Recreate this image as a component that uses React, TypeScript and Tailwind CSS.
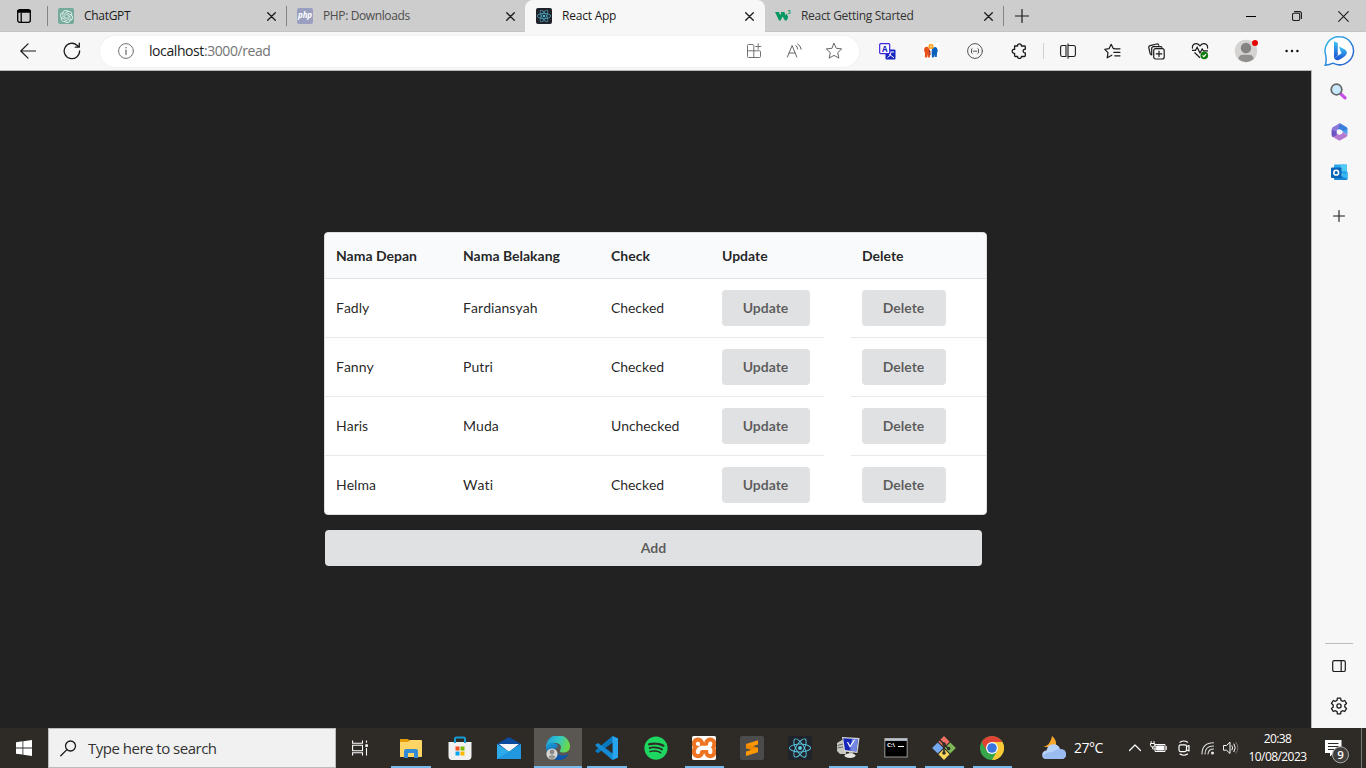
import React from "react";
import { FaReact, FaSpotify } from "react-icons/fa";
import { SiOpenai, SiXampp } from "react-icons/si";

type Kids = { children?: React.ReactNode };

function Line({ size = 16, w = 1, color = "#1b1b1b", children }: Kids & { size?: number; w?: number; color?: string }) {
  return (
    <svg width={size} height={size} viewBox={`0 0 ${size} ${size}`} fill="none" stroke={color} strokeWidth={w} strokeLinecap="round" strokeLinejoin="round" className="shrink-0">
      {children}
    </svg>
  );
}

function CloseX({ size = 9, w = 1.3 }: { size?: number; w?: number }) {
  return (
    <Line size={size} w={w}>
      <path d={`M.7 .7 L${size - 0.7} ${size - 0.7} M${size - 0.7} .7 L.7 ${size - 0.7}`} />
    </Line>
  );
}

function Tab({ icon, title, active, className, textClass }: { icon: React.ReactNode; title: string; active?: boolean; className: string; textClass: string }) {
  return (
    <div className={`flex h-8 items-center ${active ? "rounded-t-lg bg-[#f7f7f7] px-[11px]" : "px-[10px]"} ${className}`}>
      <div className="flex h-4 w-4 shrink-0 items-center justify-center">{icon}</div>
      <span className={`ml-[10px] flex-1 whitespace-nowrap text-[12px] leading-4 ${textClass}`}>{title}</span>
      <CloseX />
    </div>
  );
}

function Cell({ children, className = "w-11" }: Kids & { className?: string }) {
  return <div className={`flex h-full shrink-0 items-center justify-center ${className}`}>{children}</div>;
}

function TabStrip() {
  return (
    <div className="flex h-8 items-center bg-[#cdcdcd] shadow-[inset_0_-1px_0_#c3c3c3]">
      <Cell className="w-[47px]">
        <Line size={14} w={1.3} color="#000">
          <rect x=".7" y=".7" width="12.6" height="12.6" rx="2" />
          <path d="M1 2.4H13" strokeWidth="2.6" />
          <path d="M4.2 4V13" />
        </Line>
      </Cell>
      <div className="h-5 w-px bg-[#858585]" />
      <Tab
        className="w-[238px]"
        title="ChatGPT"
        textClass="text-[#1b1b1b] tracking-[-0.3px]"
        icon={<div className="flex h-4 w-4 items-center justify-center rounded-[2px] bg-[#74aa9c] text-[#e9f3f0]"><SiOpenai size={13} /></div>}
      />
      <div className="h-5 w-px bg-[#858585]" />
      <Tab
        className="w-[238px]"
        title="PHP: Downloads"
        textClass="text-[#4c4c4c] tracking-[-0.38px]"
        icon={<div className="flex h-4 w-4 items-center justify-center rounded-[2px] bg-[#9a9fc0] pb-0.5 text-[8px] font-bold italic leading-none tracking-[-0.2px] text-white">php</div>}
      />
      <Tab
        active
        className="w-[240px]"
        title="React App"
        textClass="text-[#1b1b1b] tracking-[-0.22px]"
        icon={<div className="flex h-4 w-4 items-center justify-center rounded-[2px] bg-[#20232a] text-[#61dafb]"><FaReact size={14} opacity={0.8} /></div>}
      />
      <Tab
        className="w-[238px]"
        title="React Getting Started"
        textClass="text-[#333] tracking-[-0.3px]"
        icon={
          <svg width="16" height="16" viewBox="0 0 16 16">
            <path d="M0 4H3.8L5.3 7.3L6.2 5.3L5.6 4H9.3L10.8 7.4L11.6 5.6L13.2 9.2L11.6 12.4H9.9L7.6 8.5L5.6 12.4H4Z" fill="#059862" />
            <text x="12.4" y="6" fontSize="5.5" fontWeight="700" fill="#059862">3</text>
          </svg>
        }
      />
      <div className="h-5 w-px bg-[#858585]" />
      <Cell className="w-[35px]">
        <Line size={14} w={1.2}><path d="M7 .5V13.5M.5 7H13.5" /></Line>
      </Cell>
      <div className="flex-1" />
      <Cell className="w-[46px]"><div className="h-px w-[10px] bg-black" /></Cell>
      <Cell className="w-[46px]">
        <Line size={10} w={1.1}>
          <rect x=".5" y="2.3" width="7.2" height="7.2" rx="1.5" />
          <path d="M2.5 .6H7.4A2 2 0 0 1 9.4 2.6V7.4" />
        </Line>
      </Cell>
      <Cell className="w-[46px]"><CloseX size={11} w={1.1} /></Cell>
    </div>
  );
}

function Toolbar() {
  return (
    <div className="flex h-[38px] items-center bg-[#f7f7f7]">
      <Cell className="ml-1.5 w-11"><Line size={16}><path d="M15.5 8H.8M8 .8L.8 8L8 15.2" strokeWidth="1.2" /></Line></Cell>
      <Cell>
        <Line size={18} w={1.3}><path d="M16.6 8.8A7.7 7.7 0 1 1 14 3.2L16 5M16.3 1.2V5.2H12.3" /></Line>
      </Cell>
      <div className="ml-1.5 flex h-[31px] w-[759px] items-center rounded-full bg-white pl-[18px] pr-[5px] shadow-[0_0_2px_#e6e6e6]">
        <Line size={16} color="#737373"><circle cx="8" cy="8" r="7.4" /><path d="M8 7.2V11.5" strokeWidth="1.3" /><path d="M8 4.7V4.8" strokeWidth="1.6" /></Line>
        <span className="ml-[15px] flex-1 whitespace-nowrap text-[14px] leading-5 tracking-[-0.42px] text-[#1b1b1b]">
          localhost<span className="text-[#747474]">:3000/read</span>
        </span>
        <Cell className="w-10">
          <Line size={16} color="#737373"><path d="M6.5 1.5H2.5Q1.5 1.5 1.5 2.5V13.5Q1.5 14.5 2.5 14.5H13.5Q14.5 14.5 14.5 13.5V8.5Q14.5 7.8 13.5 7.8H1.5M7.8 14.5V2.5Q7.8 1.5 6.5 1.5M12.2 .8V6.2M9.6 3.5H14.8" /></Line>
        </Cell>
        <Cell className="w-10">
          <Line size={16} color="#666"><path d="M1.4 14L6.1 2.5L10.8 14M3.1 10H9.1M9.9 2.5Q11.6 3.8 11.6 6M11.6 .9Q14.8 2.6 15.2 6.3" /></Line>
        </Cell>
        <Cell className="w-10">
          <Line size={18} color="#666"><path d="M9 1.4L11.3 6.3L16.7 6.9L12.7 10.6L13.9 16.1L9 13.4L4.1 16.1L5.3 10.6L1.3 6.9L6.7 6.3Z" /></Line>
        </Cell>
      </div>
      <Cell className="ml-1.5 w-11">
        <svg width="17" height="17" viewBox="0 0 17 17">
          <rect x="6.5" y="6.5" width="10" height="10" rx="1" fill="#1725c4" />
          <path d="M8.5 9H15M12 9Q12 13 8.5 14.5M10 11L15 14.8" stroke="#fff" fill="none" />
          <rect x=".7" y=".7" width="10" height="10" rx="1" fill="#fff" stroke="#3a25df" strokeWidth="1.2" />
          <text x="3" y="8.6" fontSize="8" fontWeight="700" fill="#1725c4">A</text>
        </svg>
      </Cell>
      <Cell>
        <svg width="16" height="16" viewBox="0 0 16 16">
          <rect width="16" height="16" fill="#fff" />
          <path d="M1.2 5.5Q2 3 5 4L7.4 8L6.8 14.5H4.6L4.4 11L3.8 14.5H1.8L2 10Q.6 8 1.2 5.5Z" fill="#e8501c" />
          <path d="M9 6Q12 2.4 14.2 5.5Q15.4 8 14 10L13.8 14H11.8L11.6 11.5L10.8 14.5H9L8.6 9Z" fill="#0862bd" />
          <circle cx="8" cy="3.4" r="2.6" fill="#f8a126" /><circle cx="8" cy="3.4" r="1.1" fill="#fcd08a" />
          <path d="M6.4 7L7.2 12" stroke="#8c2b43" />
        </svg>
      </Cell>
      <Cell><Line size={16} color="#555"><circle cx="8" cy="8" r="7.4" /><path d="M5.2 5.3Q4 5.6 4.5 8Q4 10.4 5.2 10.7M10.8 5.3Q12 5.6 11.5 8Q12 10.4 10.8 10.7M6.3 8.2H9.7" /></Line></Cell>
      <Cell>
        <Line size={16} w={1.3}><path d="M3.6 3H6.6C6.2 .2 10.8 .2 10.4 3H13.4Q14.3 3 14.3 3.8V6.3C11.4 5.8 11.4 10.3 14.3 9.8V12.7Q14.3 13.5 13.4 13.5H10.4C10.8 16 6.2 16 6.6 13.5H4.4Q3.6 13.5 3.6 12.7V10.3C.4 10.6 .4 5.9 3.6 6.3V3Z" /></Line>
      </Cell>
      <div className="ml-0.5 mr-0.5 h-4 w-px bg-[#d0d0d0]" />
      <Cell>
        <Line size={16} w={1.1}><path d="M6 2.5H2.5Q.6 2.5 .6 4.3V11.7Q.6 13.5 2.5 13.5H6ZM10 2.5H13.5Q15.4 2.5 15.4 4.3V11.7Q15.4 13.5 13.5 13.5H10M8 .8V15.2M8 2.5H10M8 13.5H10" /></Line>
      </Cell>
      <Cell>
        <Line size={17} w={1.2}><path d="M10.3 5.7H9.4L7.2 1.3L5 5.7L.8 6.4L4 9.7L3.2 14.8L7.8 12.2M10.8 5.8H16M9.8 9.3H16M10.8 12.8H16" /></Line>
      </Cell>
      <Cell>
        <Line size={17} w={1.2}><rect x="5.7" y="5.7" width="10.5" height="10.3" rx="2" /><path d="M11 8V13.6M8.2 10.8H13.8M3.6 11.8Q2.4 11.5 2.1 10.5L.8 4.5Q.5 3 2 2.6L8.8 1Q10.3 .7 10.8 2.2M3.7 12V5.6Q3.7 3.6 5.7 3.6H12.5Q13.7 3.6 13.9 4.4" /></Line>
      </Cell>
      <Cell>
        <svg width="18" height="18" viewBox="0 0 18 18" fill="none" stroke="#1b1b1b" strokeWidth="1.2">
          <path d="M1.5 6.7C.6 1.1 6.1 .2 9 3.8C11.9 .2 17.4 1.1 16.5 6.7M1 8.4H4.5L6.2 5.4L9 11L11.2 7L12.4 8.8H17M3.5 10.5L9 15.7" />
          <circle cx="13.3" cy="13.4" r="3.8" fill="#107c10" stroke="none" /><path d="M11.6 13.4L12.8 14.6L15.1 12.2" stroke="#fff" />
        </svg>
      </Cell>
      <Cell className="w-12">
        <svg width="24" height="24" viewBox="0 0 24 24" className="overflow-visible">
          <circle cx="12" cy="12" r="11.2" fill="#d4d3d1" />
          <circle cx="12" cy="9" r="5.2" fill="#858381" />
          <path d="M4.3 20.1Q5 15.8 9 15.8H15Q19 15.8 19.7 20.1Q16.2 23.2 12 23.2Q7.8 23.2 4.3 20.1Z" fill="#918f8d" />
          <circle cx="21" cy="4" r="3" fill="#e60000" />
        </svg>
      </Cell>
      <Cell>
        <svg width="14" height="4" viewBox="0 0 14 4" fill="#111"><circle cx="1.6" cy="2" r="1.2" /><circle cx="7" cy="2" r="1.2" /><circle cx="12.4" cy="2" r="1.2" /></svg>
      </Cell>
      <Cell className="w-[49px]">
        <svg width="32" height="32" viewBox="0 0 32 32">
          <defs>
            <linearGradient id="bb" x1="0" y1="0" x2="1" y2="1"><stop stopColor="#31bce9" /><stop offset="1" stopColor="#2856ce" /></linearGradient>
            <linearGradient id="bl" x1="0" y1="0" x2="0" y2="1"><stop stopColor="#3bc8f5" /><stop offset="1" stopColor="#1b4fd3" /></linearGradient>
          </defs>
          <path d="M16.5 1.8A14 14 0 1 1 10 28.2Q6.5 30 2.2 30.2Q3.8 26.7 2.8 20.3A14 14 0 0 1 16.5 1.8Z" fill="#fff" stroke="url(#bb)" strokeWidth="1.5" />
          <path d="M11 6.2L14.8 8V20.5L11 23Z" fill="url(#bl)" />
          <path d="M16 11.5L22 14.5Q24.3 16.3 23.5 19Q22.7 21.5 15.8 25Q12.8 26 11 23L18.6 18.3L17.5 16Z" fill="url(#bl)" />
        </svg>
      </Cell>
    </div>
  );
}

const people = [
  ["Fadly", "Fardiansyah", "Checked"],
  ["Fanny", "Putri", "Checked"],
  ["Haris", "Muda", "Unchecked"],
  ["Helma", "Wati", "Checked"],
];

const columns = "grid-cols-[127px_148px_111px_113px_27px_135px]";

function ActionButton({ label, className }: { label: string; className: string }) {
  return (
    <button className={`flex h-9 items-center justify-center rounded-[4px] bg-[#e0e1e2] text-[14px] font-bold leading-[14px] text-black/60 ${className}`}>
      {label}
    </button>
  );
}

function Page() {
  return (
    <main className="flex-1 bg-[#222] pl-[324px] pt-[161px] font-['Lato',sans-serif] text-[14px] text-black/87 [font-variant-ligatures:none]">
      <section className="w-[663px] overflow-hidden rounded-[4px] border border-[#dededf] bg-white">
        <div className={`grid h-[46px] items-center border-b border-[#e1e2e3] bg-[#f9fafb] font-bold ${columns}`}>
          <div className="pl-[11px]">Nama Depan</div>
          <div className="pl-[11px]">Nama Belakang</div>
          <div className="pl-[11px]">Check</div>
          <div className="pl-[11px]">Update</div>
          <div />
          <div className="pl-[11px]">Delete</div>
        </div>
        {people.map(([first, last, check], i) => {
          const cell = `flex items-center pl-[11px] ${i < people.length - 1 ? "border-b border-[#e8e9e9]" : ""}`;
          const text = `${cell} pb-0.5 [font-kerning:none]`;
          return (
            <div key={first} className={`grid ${i < people.length - 1 ? "h-[59px]" : "h-[58px]"} ${columns}`}>
              <div className={text}>{first}</div>
              <div className={`${text} tracking-[0.06px]`}>{last}</div>
              <div className={`${text} tracking-[-0.08px]`}>{check}</div>
              <div className={cell}><ActionButton label="Update" className="w-[88px] pr-px" /></div>
              <div />
              <div className={cell}><ActionButton label="Delete" className="w-[84px] pr-px" /></div>
            </div>
          );
        })}
      </section>
      <ActionButton label="Add" className="ml-px mt-[15px] w-[657px]" />
    </main>
  );
}

function Sidebar() {
  return (
    <aside className="flex w-[55px] flex-col items-center border-l border-[#b9b9b9] bg-[#f7f7f7] pt-px">
      <div className="flex h-10 w-full items-center justify-center pr-px">
        <svg width="17" height="17" viewBox="0 0 17 17">
          <path d="M10.8 10.8L15 14.8" stroke="#c84be8" strokeWidth="3.2" strokeLinecap="round" />
          <circle cx="6.5" cy="6.5" r="5.3" fill="#c8e9fb" stroke="#666" strokeWidth="1.7" />
        </svg>
      </div>
      <div className="flex h-[42px] w-full items-center justify-center">
        <svg width="17" height="18" viewBox="0 0 17 18">
          <path d="M8.5 .3L15.2 4Q16.5 4.8 16.5 6.3V11.5L12.3 9.2L11 7L8.5 5.8L5.5 6.7L4.9 3Z" fill="#4ba0ee" />
          <path d="M9 .3L2 4Q.7 4.8 .7 6.3V11.7Q.7 13.2 2 14L5.6 13V8.3Q5.9 6.8 7 6.2L11 3.5Z" fill="#8d78d9" />
          <path d="M.7 11.7Q.7 13.2 2 14L7.5 17.2Q8.5 17.8 9.5 17.2L15.2 14Q16.5 13.2 16.5 11.7L11.4 8.8V10.4L8.5 12L5.6 10.4Z" fill="#b47ad0" />
          <path d="M.7 7V11.7Q.7 13.2 2 14L5.6 12V8.5Z" fill="#6c54c2" />
          <path d="M9 .3L15.2 4Q16.5 4.8 16.5 6.3L11.4 8Q10 6 7 6.2Z" fill="#2f74d6" opacity=".7" />
        </svg>
      </div>
      <div className="flex h-[39px] w-full items-center justify-center">
        <svg width="17" height="17" viewBox="0 0 17 17">
          <rect x="3" y=".5" width="13" height="10" rx="1" fill="#28a8ea" />
          <path d="M9.5 .5H15Q16 .5 16 1.5V7H9.5Z" fill="#50c9f5" />
          <path d="M3 8L9.8 12L16.5 8V15Q16.5 16 15.5 16H4Q3 16 3 15Z" fill="#1784d6" />
          <path d="M16.5 8V15L10 12Z" fill="#35b8f1" />
          <rect y="3.5" width="10.5" height="10.5" rx="1" fill="#0864b8" />
          <circle cx="5.2" cy="8.7" r="2.4" fill="none" stroke="#fff" strokeWidth="1.5" />
        </svg>
      </div>
      <div className="flex h-[47px] w-full items-center justify-center pr-px">
        <Line size={12} w={1.1}><path d="M6 .5V11.5M.5 6H11.5" /></Line>
      </div>
      <div className="flex-1" />
      <div className="h-px w-7 bg-[#bdbdbd]" />
      <div className="flex h-[44px] w-full items-center justify-center">
        <Line size={14} w={1.2}><rect x=".7" y="1.7" width="12.6" height="10.8" rx="1.6" /><path d="M9.2 1.7V12.5" /></Line>
      </div>
      <div className="mb-1 flex h-9 w-full items-center justify-center">
        <Line size={18} w={1.3}>
          <circle cx="9" cy="9" r="2.1" />
          <path d="M7.4 1.2H10.6L11 3.4L12.6 4.3L14.7 3.5L16.5 6.4L14.8 7.9V10.1L16.5 11.6L14.7 14.5L12.6 13.7L11 14.6L10.6 16.8H7.4L7 14.6L5.4 13.7L3.3 14.5L1.5 11.6L3.2 10.1V7.9L1.5 6.4L3.3 3.5L5.4 4.3L7 3.4Z" />
        </Line>
      </div>
    </aside>
  );
}

function App24({ children }: Kids) {
  return <svg width="24" height="24" viewBox="0 0 24 24">{children}</svg>;
}

function Task({ children, className = "w-12", bar = "w-0", active = false }: Kids & { className?: string; bar?: string; active?: boolean }) {
  return (
    <div className={`flex h-10 shrink-0 flex-col items-center ${active ? "bg-[#5a5652]" : ""} ${className}`}>
      <div className="flex h-[38px] items-center pt-0.5">{children}</div>
      <div className={`h-0.5 bg-[#76b9ed] ${bar}`} />
    </div>
  );
}

function Taskbar() {
  return (
    <footer className="flex h-10 bg-[#2e2a26] text-white">
      <Cell className="w-12">
        <svg width="16" height="16" viewBox="0 0 16 16" fill="#fff"><path d="M0 2.2L6.5 1.3V7.5H0ZM7.3 1.2L16 0V7.5H7.3ZM0 8.4H6.5V14.6L0 13.7ZM7.3 8.4H16V16L7.3 14.8Z" /></svg>
      </Cell>
      <div className="flex w-72 items-center border border-[#bbb] bg-[#f1f1f1] pl-[11px]">
        <Line size={17} w={1.3}><circle cx="10.5" cy="6" r="5" /><path d="M6.9 9.6L.8 15.8" /></Line>
        <span className="ml-[11px] whitespace-nowrap text-[15px] leading-5 tracking-[-0.5px] text-[#333]">Type here to search</span>
      </div>
      <Cell className="w-[51px] pr-[3px]">
        <svg width="17" height="16" viewBox="0 0 17 16" fill="none" stroke="#fff" strokeWidth="1.1">
          <path d="M.6 .5V3.2H10.5V.5M.6 15.5V12.8H10.5V15.5M.6 5.2H10.5V10.8H.6ZM14.5 .5V2.8M14.5 8V15.5" /><rect x="13.3" y="4.3" width="2.6" height="2.6" fill="#fff" stroke="none" />
        </svg>
      </Cell>
      <Task bar="w-10">
        <App24>
          <path d="M1 3H9L11 5H22V9H1Z" fill="#e59c09" />
          <path d="M1 6H9L11 4H22Q23 4 23 5V20Q23 21 22 21H1Z" fill="#ffd666" />
          <path d="M5 22V15Q5 13 7 13H17Q19 13 19 15V22H15V17H9V22Z" fill="#328bd4" />
        </App24>
      </Task>
      <Task className="w-[49px]">
        <App24>
          <path d="M7 8V3Q7 1.5 8.5 1.5H15.5Q17 1.5 17 3V8" fill="none" stroke="#169bd5" strokeWidth="2" />
          <path d="M.5 6H23.5V20Q23.5 24 20 24H4Q.5 24 .5 20Z" fill="#f1f1f1" />
          <path d="M7.5 10.5H11.5V14.5H7.5Z" fill="#f25022" /><path d="M12.5 10.5H16.5V14.5H12.5Z" fill="#7fba00" />
          <path d="M7.5 15.5H11.5V19.5H7.5Z" fill="#00a4ef" /><path d="M12.5 15.5H16.5V19.5H12.5Z" fill="#ffb900" />
          <path d="M7 7V3.5M17 7V3.5" stroke="#169bd5" strokeWidth="2" />
        </App24>
      </Task>
      <Task className="w-[50px]">
        <App24>
          <path d="M0 8L12 1L24 8V12H0Z" fill="#0b4c9f" />
          <path d="M2 8H22L12 16Z" fill="#f5f7f8" />
          <path d="M0 8L12 15.5L24 8V23H0Z" fill="#2daae8" />
          <path d="M0 23L24 8V23Z" fill="#1687d5" opacity=".55" />
        </App24>
      </Task>
      <Task active bar="w-12">
        <App24>
          <defs>
            <linearGradient id="eg" x1="0" y1="0" x2="1" y2=".3"><stop stopColor="#2099df" /><stop offset=".55" stopColor="#30c7c8" /><stop offset="1" stopColor="#6ad84d" /></linearGradient>
            <linearGradient id="eb" x1="0" y1="0" x2=".5" y2="1"><stop stopColor="#1ba1dd" /><stop offset="1" stopColor="#0b4b9c" /></linearGradient>
          </defs>
          <path d="M0 12A12 12 0 0 1 24 10Q24 16 18 16.5Q13.5 16.6 14 14.8Q17 9 11 7Q3 6 0 12Z" fill="url(#eg)" />
          <path d="M0 12Q2 6 8 7Q12 8 12 11Q8 12 9 16Q11 21 17 20Q21 19 22.5 18Q19 24 12 24Q1 23 0 12Z" fill="url(#eb)" />
          <path d="M9 13Q10 19 17 19.5Q21 19.4 22.6 18Q19 24 12 24Q7 21 7 16Z" fill="#0d58ad" />
          <circle cx="6" cy="18" r="5.6" fill="#d8d7d5" /><circle cx="6" cy="16" r="2.4" fill="#8b8987" /><path d="M2.5 21.3Q3 19 6 19Q9 19 9.5 21.3Q6 24.5 2.5 21.3Z" fill="#979592" />
        </App24>
      </Task>
      <Task className="w-[49px] pl-px" bar="w-10">
        <App24>
          <path d="M17.5 0L23 2.6V21.4L17.5 24L7.2 13.9L3 17.2L.5 15.7V14.2L17.5 .1Z" fill="#0878bf" />
          <path d="M.5 8.4L3 6.9L17.5 18V24L.5 9.8Z" fill="#168bd3" />
          <path d="M17.5 0L23 2.6V21.4L17.5 24Z" fill="#28a5ef" />
          <path d="M17.5 6.7V17.3L10.3 12Z" fill="#2e2a26" />
        </App24>
      </Task>
      <Task className="w-[49px]"><FaSpotify size={24} color="#1ed760" /></Task>
      <Task bar="w-[39px]">
        <div className="flex h-6 w-6 items-center justify-center overflow-hidden rounded-[2px] bg-[#ee7422]">
          <SiXampp size={34} color="white" className="shrink-0" />
        </div>
      </Task>
      <Task>
        <App24>
          <rect width="24" height="24" rx="2" fill="#4b4b4b" />
          <path d="M6 8L18 4.2V8.6L6 12.4Z" fill="#ff9800" />
          <path d="M6 8L18 11.8V16L6 12.2Z" fill="#f08a00" />
          <path d="M6 15.6L18 11.8V16.2L6 20Z" fill="#ff9800" />
        </App24>
      </Task>
      <Task>
        <div className="flex h-6 w-6 items-center justify-center rounded-[3px] bg-[#20232a]"><FaReact size={22} color="#5bcbe8" /></div>
      </Task>
      <Task bar="w-[39px]">
        <App24>
          <path d="M1 7L6 4L10 6V18L4 18L1 15Z" fill="#c6c8c0" /><path d="M1.5 9.5L7 8M1.5 12L7 11" stroke="#666" />
          <path d="M6 1L23.5 2L21.5 17L8 15.5Z" fill="#d8d9d2" /><path d="M7.2 2.2L22 3.2L20.3 15.4L9 14Z" fill="#1727ba" />
          <path d="M16 2.8L22 3.2L20.3 15.4L14 14.6Z" fill="#7487e4" /><path d="M11.5 6L14 10.5L18.5 4" fill="none" stroke="#fff" strokeWidth="1.2" />
          <path d="M13 16H17V19H13Z" fill="#aaa" /><ellipse cx="14" cy="19.6" rx="5.5" ry="2.3" fill="#e5e5df" />
        </App24>
      </Task>
      <Task bar="w-[39px]">
        <App24>
          <rect x=".8" y="2.5" width="22.4" height="18.5" fill="#000" stroke="#999" /><path d="M1 3.7H23" stroke="#bcc2cb" strokeWidth="2.4" />
          <text x="3" y="11" fontSize="6" fontWeight="700" fill="#fff">C:\</text><path d="M14 10.5H20" stroke="#fff" />
        </App24>
      </Task>
      <Task bar="w-[39px]">
        <App24>
          <g transform="rotate(45 12 12)"><path d="M3.6 3.6H11.5V11.5H3.6Z" fill="#ef7065" /><path d="M12.5 3.6H20.4V11.5H12.5Z" fill="#80b957" /><path d="M3.6 12.5H11.5V20.4H3.6Z" fill="#75a8ef" /><path d="M12.5 12.5H20.4V20.4H12.5Z" fill="#f6d65b" /></g>
          <path d="M8 4L12 8V18M12 8.5L16.5 12.5" stroke="#302d29" strokeWidth="1.6" fill="none" /><circle cx="12" cy="8" r="1.8" fill="#302d29" /><circle cx="12" cy="17" r="1.8" fill="#302d29" /><circle cx="16.6" cy="12.5" r="1.8" fill="#302d29" />
        </App24>
      </Task>
      <Task bar="w-[39px]">
        <App24>
          <circle cx="12" cy="12" r="12" fill="#37a64a" />
          <path d="M12 0A12 12 0 0 1 22.4 6H12L6.8 15L1.6 6A12 12 0 0 1 12 0Z" fill="#df4435" />
          <path d="M22.4 6A12 12 0 0 1 12 24L17.2 15L12 6Z" fill="#fbc935" />
          <circle cx="12" cy="12" r="6" fill="#fff" /><circle cx="12" cy="12" r="4.8" fill="#3974df" />
        </App24>
      </Task>
      <div className="flex-1" />
      <div className="flex w-[350px] shrink-0 items-center">
        <Cell className="ml-[26px] w-6">
          <App24>
            <path d="M10 0Q15.5 4 13.5 11H1Q8.5 9.5 10 0Z" fill="#f7a82b" />
            <path d="M3 23Q0 22 .2 18.5Q.7 14.8 4.5 14.5Q5.7 8.5 11.2 8.2Q16.5 8 18 13Q23.7 13.2 24 18Q24 22.5 20 23Z" fill="#b8d3fb" />
            <path d="M1 20Q4 16 10 16Q14 13 18 13Q23.7 13.2 24 18Q24 22.5 20 23H3Z" fill="#9bbcf0" />
          </App24>
        </Cell>
        <span className="ml-2 w-[30px] whitespace-nowrap text-[14px] leading-5 tracking-[-0.5px]">27°C</span>
        <Cell className="ml-[17px] w-7"><Line size={12} w={1.2} color="#fff"><path d="M.5 8.5L6 3L11.5 8.5" /></Line></Cell>
        <Cell className="w-6 pr-[5px]">
          <Line size={17} color="#fff"><rect x="5.5" y="4.5" width="9.5" height="7" /><rect x="7" y="6" width="6.5" height="4" fill="#fff" /><path d="M16.3 6.5V9.5M1.2 1.5V3.5M4 1.5V3.5M.6 3.5H4.7V5.5Q4.7 7 2.7 7Q.6 7 .6 5.5ZM2.7 7V9H5" /></Line>
        </Cell>
        <Cell className="w-6 pr-0.5">
          <Line size={16} w={1.2} color="#fff"><rect x="3" y="4.8" width="7.5" height="6.8" rx="1.5" /><path d="M10.8 6.5L13 5.5V11L10.8 10M4 2.2Q8 -.2 11.5 2.2M4 14Q8 16.5 11.5 14" /></Line>
        </Cell>
        <Cell className="w-6 pr-0.5">
          <Line size={14} w={1.1} color="#ddd"><path d="M1 13Q1 2 12.5 1.8M4 13Q4 5 12.5 5M7 13Q7.5 8 12.5 8" /><circle cx="11.5" cy="12" r="1" fill="#fff" /></Line>
        </Cell>
        <Cell className="w-[22px] pr-0.5">
          <Line size={16} color="#fff"><path d="M.8 5.5H3.5L7 2.2V13.5L3.5 10.2H.8ZM9 5.8Q10.5 7.8 9 10M11 4Q13.7 7.8 11 11.7" /><path d="M13 2.4Q17 8 13 13.2" stroke="#77736f" /></Line>
        </Cell>
        <div className="ml-[5px] flex h-10 w-[59px] flex-col items-center pt-0.5 text-[12px] leading-[18px] tracking-[-0.62px]">
          <span>20:38</span><span className="whitespace-nowrap tracking-[-0.58px]">10/08/2023</span>
        </div>
        <div className="relative ml-[18px] h-10 w-6 shrink-0">
          <svg width="26" height="40" viewBox="0 0 26 40">
            <path d="M0 12H16.5V25H9L5 28.5V25H0Z" fill="#fff" /><path d="M3 15.5H13.5M3 18.5H13.5M3 21.5H9" stroke="#2e2a26" />
            <circle cx="15.5" cy="26.8" r="8" fill="#42403d" stroke="#aaa" /><text x="12.3" y="31" fontSize="11.5" fontWeight="600" fill="#fff">9</text>
          </svg>
        </div>
        <div className="ml-3 h-10 w-px bg-[#777]" />
      </div>
    </footer>
  );
}

export default function App() {
  return (
    <div className="flex h-[768px] w-[1366px] flex-col overflow-hidden bg-white font-['Open_Sans','Noto_Sans',sans-serif]">
      <TabStrip />
      <Toolbar />
      <div className="flex min-h-0 flex-1">
        <div className="flex flex-1 flex-col border-t border-[#b9b9b9]"><Page /></div>
        <Sidebar />
      </div>
      <Taskbar />
    </div>
  );
}
